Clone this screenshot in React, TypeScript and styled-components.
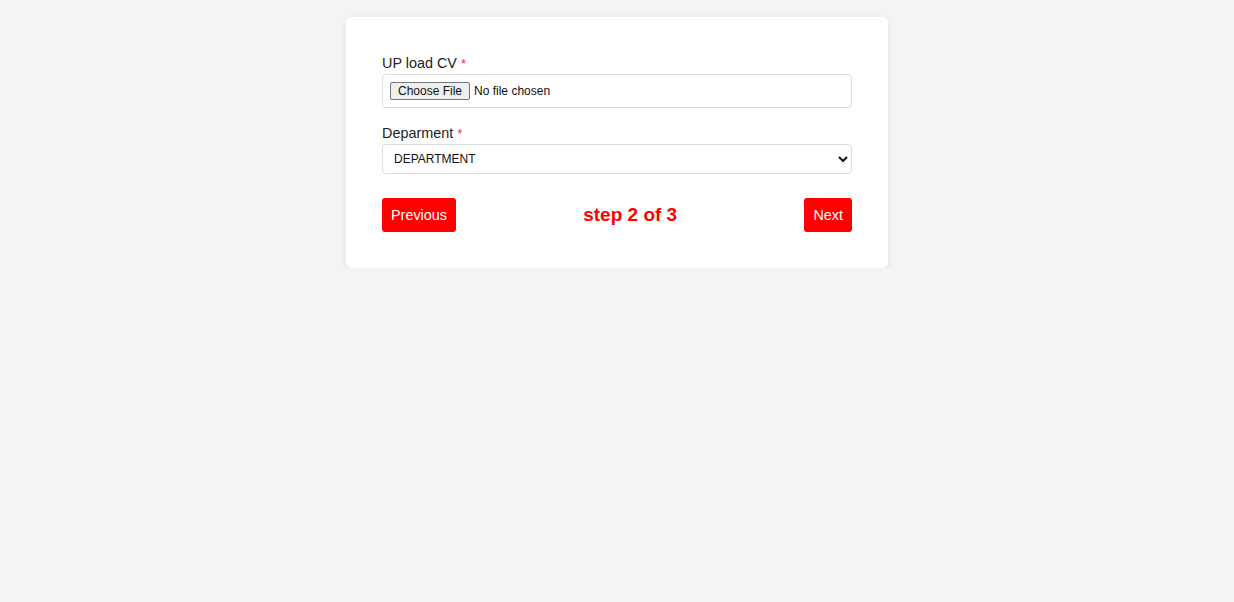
import { FC } from "react";
import styled, { createGlobalStyle } from "styled-components";

const GlobalStyle = createGlobalStyle`
  body {
    margin: 0;
    background: #f4f4f4;
    font-family: "Liberation Sans", Arial, sans-serif;
  }
`;

const Page = styled.div`
  display: flex;
  justify-content: center;
  padding-top: 17px;
`;

const Card = styled.form`
  width: 542px;
  box-sizing: border-box;
  padding: 36px;
  background: #fff;
  border-radius: 5px;
  box-shadow: 0 1px 6px rgba(0, 0, 0, 0.08);
`;

const Field = styled.div<{ $gap?: number }>`
  display: flex;
  flex-direction: column;
  margin-bottom: ${(p) => p.$gap ?? 15}px;
`;

const Label = styled.label`
  font-size: 14.4px;
  line-height: 21px;
  color: #222;
`;

const Star = styled.span`
  color: #e53935;
  font-size: 13px;
  margin-left: 4px;
`;

const FileInput = styled.input`
  box-sizing: border-box;
  width: 100%;
  padding: 7px 7px;
  border: 1px solid #dcdcdc;
  border-radius: 4px;
  font-family: "Liberation Sans", Arial, sans-serif;
  font-size: 12px;
  line-height: 18px;
  color: #111;

  &::file-selector-button {
    box-sizing: border-box;
    height: 18px;
    font-family: "Liberation Sans", Arial, sans-serif;
    font-size: 12px;
    line-height: 14px;
    padding: 1px 7px;
    margin-right: 4px;
    border: 1px solid #767676;
    border-radius: 2px;
    background: #efefef;
    color: #111;
  }
`;

const Select = styled.select`
  box-sizing: border-box;
  width: 100%;
  height: 30px;
  padding: 0 7px;
  border: 1px solid #dcdcdc;
  border-radius: 4px;
  background: #fff;
  font-family: "Liberation Sans", Arial, sans-serif;
  font-size: 12px;
  color: #111;
`;

const Footer = styled.div`
  display: flex;
  align-items: center;
  justify-content: space-between;
`;

const Button = styled.button`
  height: 34px;
  padding: 0 9px;
  border: none;
  border-radius: 3px;
  background: #ff0000;
  color: #fff;
  font-family: "Liberation Sans", Arial, sans-serif;
  font-size: 14.4px;
  cursor: pointer;
`;

const Step = styled.span`
  color: #ff0000;
  font-weight: bold;
  font-size: 19px;
`;

const App: FC = () => (
  <Page>
    <GlobalStyle />
    <Card onSubmit={(e) => e.preventDefault()}>
      <Field>
        <Label>
          UP load CV<Star>*</Star>
        </Label>
        <FileInput type="file" />
      </Field>
      <Field $gap={24}>
        <Label>
          Deparment<Star>*</Star>
        </Label>
        <Select defaultValue="DEPARTMENT">
          <option>DEPARTMENT</option>
          <option>ENGINEERING</option>
          <option>MARKETING</option>
        </Select>
      </Field>
      <Footer>
        <Button type="button">Previous</Button>
        <Step>step 2 of 3</Step>
        <Button type="button">Next</Button>
      </Footer>
    </Card>
  </Page>
);

export default App;
